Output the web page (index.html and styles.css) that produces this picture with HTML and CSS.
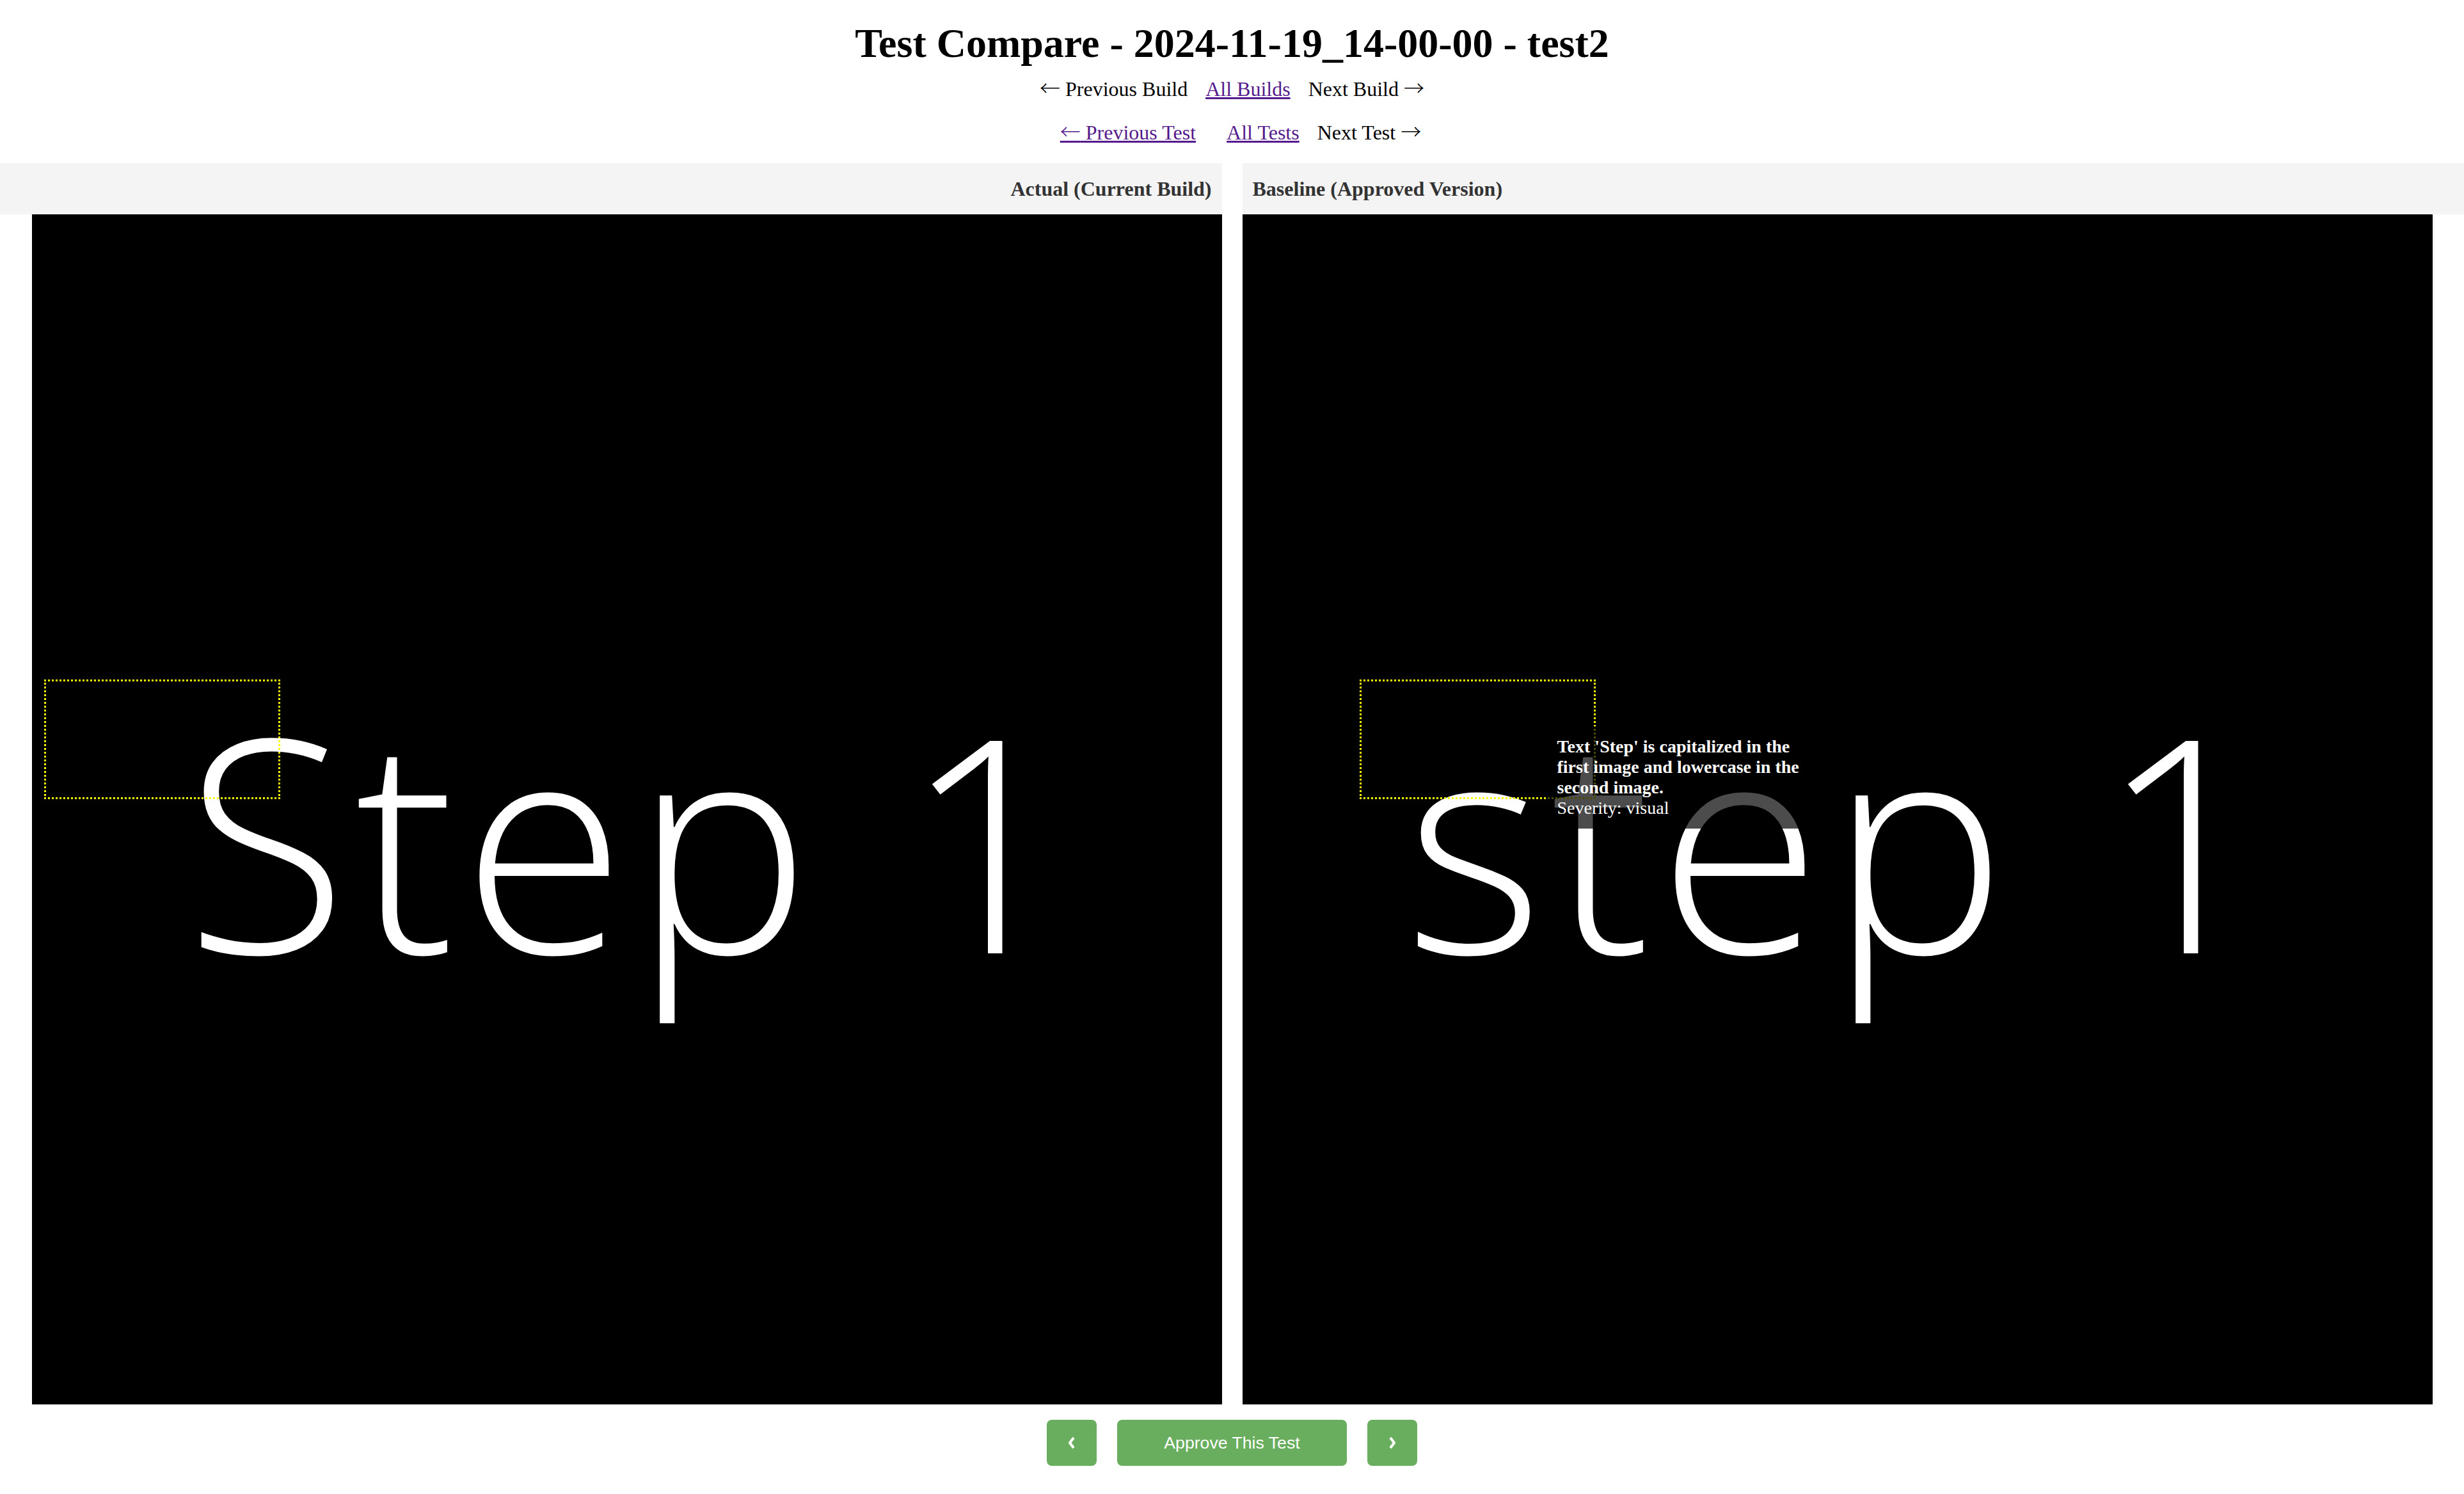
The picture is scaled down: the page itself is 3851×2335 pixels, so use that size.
FILE: index.html
```html
<!DOCTYPE html>
<html lang="en">
<head>
<meta charset="utf-8">
<title>Test Compare - 2024-11-19_14-00-00 - test2</title>
<link rel="stylesheet" href="styles.css">
</head>
<body>
<h1 class="title">Test Compare - 2024-11-19_14-00-00 - test2</h1>
<div class="nav nav-builds">
  <span class="nav-item"><span class="arrow">←</span> Previous Build</span>
  <a class="nav-item" href="#">All Builds</a>
  <span class="nav-item">Next Build <span class="arrow">→</span></span>
</div>
<div class="nav nav-tests">
  <a class="nav-item nav-prev" href="#"><span class="arrow">←</span> Previous Test</a>
  <a class="nav-item" href="#">All Tests</a>
  <span class="nav-item">Next Test <span class="arrow">→</span></span>
</div>
<div class="compare">
  <div class="col col-left">
    <div class="col-head">Actual (Current Build)</div>
    <div class="shot-wrap">
      <div class="shot">
        <div class="shot-text shot-text-left">Step 1</div>
        <div class="diff-box diff-box-left"></div>
      </div>
    </div>
  </div>
  <div class="col col-right">
    <div class="col-head">Baseline (Approved Version)</div>
    <div class="shot-wrap">
      <div class="shot">
        <div class="shot-text shot-text-right">step 1</div>
        <div class="diff-box diff-box-right"></div>
        <div class="tooltip"><strong>Text 'Step' is capitalized in the first image and lowercase in the second image.</strong><br>Severity: visual</div>
      </div>
    </div>
  </div>
</div>
<div class="actions">
  <button class="btn btn-icon" type="button" aria-label="Previous">
    <svg class="chev" viewBox="0 0 12 20" width="12" height="20"><polyline points="9,2 3,10 9,18" fill="none" stroke="#fff" stroke-width="4" stroke-linejoin="miter"/></svg>
  </button>
  <button class="btn btn-approve" type="button">Approve This Test</button>
  <button class="btn btn-icon" type="button" aria-label="Next">
    <svg class="chev" viewBox="0 0 12 20" width="12" height="20"><polyline points="3,2 9,10 3,18" fill="none" stroke="#fff" stroke-width="4" stroke-linejoin="miter"/></svg>
  </button>
</div>
</body>
</html>
```
FILE: styles.css
```css
html, body {
  margin: 0;
  padding: 0;
  background: #fff;
}
body {
  font-family: "Liberation Serif", "Times New Roman", serif;
  font-size: 32px;
  color: #000;
}
.title {
  margin: 31px 0 0;
  font-size: 64px;
  font-weight: bold;
  text-align: center;
  line-height: normal;
}
.nav {
  text-align: center;
  line-height: 36px;
  height: 36px;
}
.arrow {
  font-family: "Noto Sans CJK JP", "DejaVu Sans", sans-serif;
  font-weight: 300;
  line-height: 1;
}
.nav-builds {
  margin-top: 15px;
}
.nav-tests {
  margin-top: 32px;
  padding-left: 27px;
}
.nav-item {
  margin: 0 10px;
  color: #000;
}
a.nav-item {
  color: #551a8b;
  text-decoration: underline;
}
.nav-prev {
  margin-right: 30px;
}
.compare {
  display: flex;
  gap: 32px;
  margin-top: 31px;
}
.col {
  flex: 1 1 0;
  min-width: 0;
  display: flex;
  flex-direction: column;
}
.col-head {
  background: #f4f4f4;
  height: 80px;
  line-height: 80px;
  padding: 0 16px;
  font-weight: bold;
  color: #333;
  font-size: 32px;
}
.col-left .col-head {
  text-align: right;
}
.col-right .col-head {
  text-align: left;
}
.shot-wrap {
  display: flex;
}
.col-left .shot-wrap {
  justify-content: flex-end;
}
.col-right .shot-wrap {
  justify-content: flex-start;
}
.shot {
  position: relative;
  width: 1860px;
  height: 1860px;
  background: #000;
  overflow: hidden;
}
.shot-text {
  position: absolute;
  font-family: "Open Sans", "DejaVu Sans", sans-serif;
  font-weight: 300;
  font-size: 465px;
  line-height: 1;
  letter-spacing: 12px;
  color: #fff;
  white-space: nowrap;
}
.shot-text-left {
  left: 240px;
  top: 742px;
}
.shot-text-right {
  left: 254px;
  top: 742px;
}
.diff-box {
  position: absolute;
  top: 727px;
  width: 369px;
  height: 187px;
  border: 3px dotted #ffff00;
  box-sizing: border-box;
}
.diff-box-left {
  left: 19px;
}
.diff-box-right {
  left: 183px;
}
.tooltip {
  position: absolute;
  left: 476px;
  top: 800px;
  width: 404px;
  padding: 16px;
  background: rgba(0, 0, 0, 0.7);
  color: #fff;
  font-family: "Liberation Serif", "Times New Roman", serif;
  font-size: 28px;
  line-height: 32px;
}
.tooltip strong {
  font-weight: bold;
}
.actions {
  display: flex;
  justify-content: center;
  gap: 32px;
  margin-top: 24px;
}
.btn {
  height: 72px;
  border: none;
  border-radius: 8px;
  background: #69ad5e;
  color: #fff;
  font-family: "Liberation Sans", Arial, sans-serif;
  font-size: 26.67px;
  display: flex;
  align-items: center;
  justify-content: center;
  padding: 0;
  cursor: pointer;
}
.btn-icon {
  width: 78px;
}
.btn-approve {
  width: 359px;
}
.chev {
  display: block;
}
```
